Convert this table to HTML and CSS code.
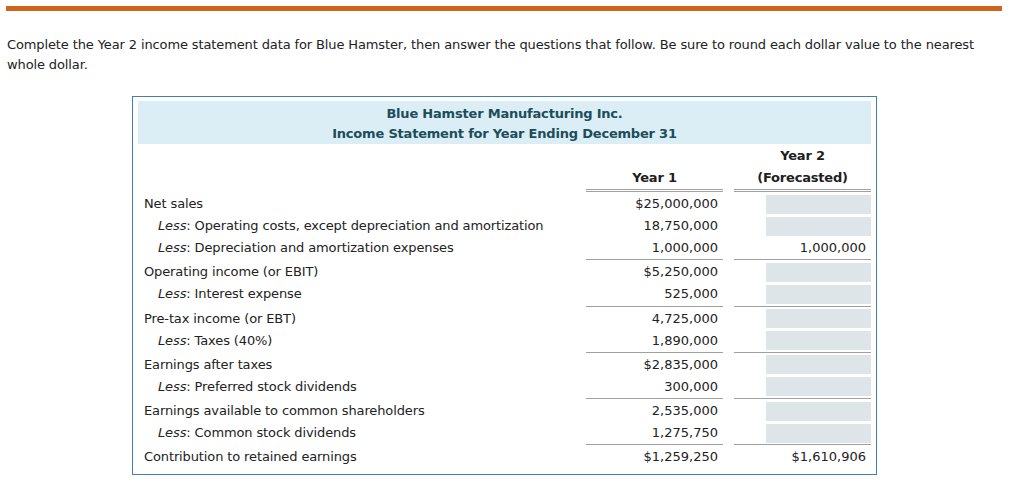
FILE: index.html
```html
<!DOCTYPE html>
<html lang="en">
<head>
<meta charset="utf-8">
<title>Blue Hamster Income Statement</title>
<link rel="stylesheet" href="styles.css">
</head>
<body>
<div class="page">
  <div class="topbar"></div>
  <p class="intro">Complete the Year 2 income statement data for Blue Hamster, then answer the questions that follow. Be sure to round each dollar value to the nearest whole dollar.</p>
  <div class="box">
    <div class="band">
      <div>Blue Hamster Manufacturing Inc.</div>
      <div>Income Statement for Year Ending December 31</div>
    </div>
    <div class="stmt">
      <div class="row head1"><div class="lbl"></div><div class="v1"></div><div class="v2 hd">Year 2</div></div>
      <div class="row head2"><div class="lbl"></div><div class="v1 hd">Year 1</div><div class="v2 hd">(Forecasted)</div></div>

      <div class="row"><div class="lbl">Net sales</div><div class="v1">$25,000,000</div><div class="v2"><span class="inp"></span></div></div>
      <div class="row"><div class="lbl ind"><i>Less</i>: Operating costs, except depreciation and amortization</div><div class="v1">18,750,000</div><div class="v2"><span class="inp"></span></div></div>
      <div class="row"><div class="lbl ind"><i>Less</i>: Depreciation and amortization expenses</div><div class="v1">1,000,000</div><div class="v2">1,000,000</div></div>

      <div class="row sep"><div class="lbl">Operating income (or EBIT)</div><div class="v1">$5,250,000</div><div class="v2"><span class="inp"></span></div></div>
      <div class="row"><div class="lbl ind"><i>Less</i>: Interest expense</div><div class="v1">525,000</div><div class="v2"><span class="inp"></span></div></div>

      <div class="row sep"><div class="lbl">Pre-tax income (or EBT)</div><div class="v1">4,725,000</div><div class="v2"><span class="inp"></span></div></div>
      <div class="row"><div class="lbl ind"><i>Less</i>: Taxes (40%)</div><div class="v1">1,890,000</div><div class="v2"><span class="inp"></span></div></div>

      <div class="row sep"><div class="lbl">Earnings after taxes</div><div class="v1">$2,835,000</div><div class="v2"><span class="inp"></span></div></div>
      <div class="row"><div class="lbl ind"><i>Less</i>: Preferred stock dividends</div><div class="v1">300,000</div><div class="v2"><span class="inp"></span></div></div>

      <div class="row sep"><div class="lbl">Earnings available to common shareholders</div><div class="v1">2,535,000</div><div class="v2"><span class="inp"></span></div></div>
      <div class="row"><div class="lbl ind"><i>Less</i>: Common stock dividends</div><div class="v1">1,275,750</div><div class="v2"><span class="inp"></span></div></div>

      <div class="row sep"><div class="lbl">Contribution to retained earnings</div><div class="v1">$1,259,250</div><div class="v2">$1,610,906</div></div>
    </div>
  </div>
</div>
</body>
</html>
```

FILE: styles.css
```css
html, body {
  margin: 0;
  padding: 0;
  background: #ffffff;
}

body {
  font-family: "DejaVu Sans", Verdana, sans-serif;
  font-size: 13px;
  color: #222222;
  letter-spacing: -0.12px;
}

.page {
  padding: 6px 22px 0 6px;
}

.topbar {
  height: 5px;
  background: #cd651f;
}

.intro {
  margin: 24px 0 0 1px;
  line-height: 20px;
}

.box {
  margin: 21px 0 0 126px;
  width: 733px;
  border: 1px solid #3f7fb5;
  padding: 4px 5px 7px 5px;
}

.band {
  background: #dbeef5;
  color: #1b4d5b;
  font-weight: bold;
  letter-spacing: -0.2px;
  text-align: center;
  line-height: 20px;
  padding: 3px 0 0;
}

.stmt {
  display: grid;
  grid-template-columns: 448px 137px 148px;
}

.row {
  display: contents;
}

.row > div {
  box-sizing: border-box;
  height: 22px;
  padding-top: 2px;
  line-height: 20px;
  display: flex;
  align-items: center;
  white-space: nowrap;
}

.lbl {
  padding-left: 6px;
}

.lbl.ind {
  padding-left: 20px;
}

.v1, .v2 {
  justify-content: flex-end;
  padding-right: 5px;
  letter-spacing: 0;
}

.v2 {
  margin-left: 11px;
}

.v2 .inp {
  display: block;
  width: 105px;
  height: 19px;
  background: #dde5e8;
  margin-right: -5px;
}

.hd {
  justify-content: center;
  font-weight: bold;
  letter-spacing: -0.2px;
  padding-right: 0;
  color: #1e1e1e;
}

.head2 > div {
  height: 26px;
  border-bottom: 3px double #a0a0a0;
  padding-bottom: 1px;
}

.head2 > .lbl {
  border-bottom-color: transparent;
}

.row.sep > div {
  height: 23px;
  margin-top: 1.3px;
  border-top: 1px solid #a0a0a0;
}

.row.sep > .lbl {
  border-top-color: transparent;
}
```
